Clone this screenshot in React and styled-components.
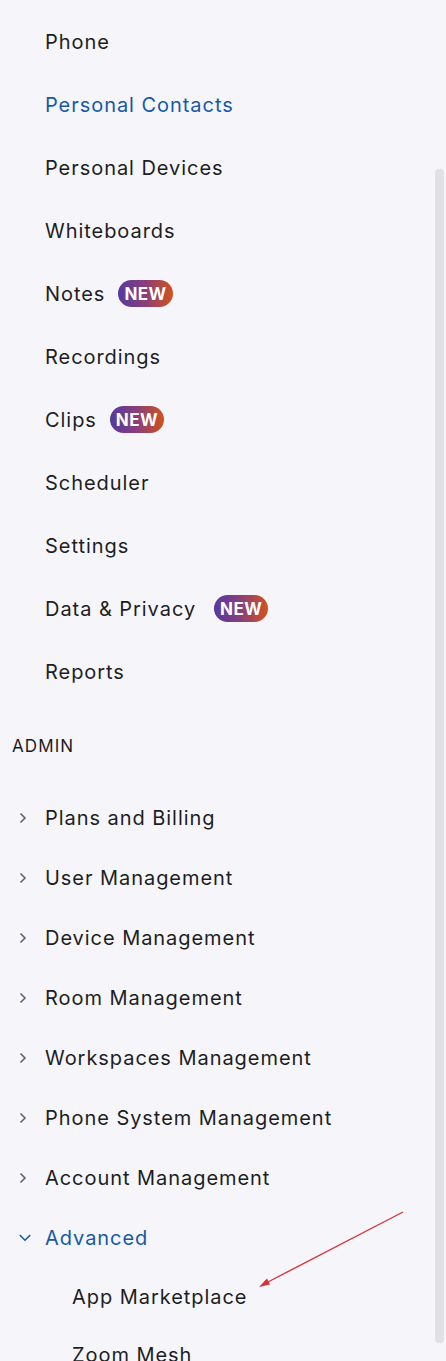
import React from 'react'
import styled, { createGlobalStyle } from 'styled-components'

const ink = '#1d1d24'
const blue = '#1559a8'
const bg = '#f6f6fa'

const GlobalStyle = createGlobalStyle`
  html, body {
    margin: 0;
    padding: 0;
    background: ${bg};
  }
  body {
    font-family: Inter, 'Noto Sans', sans-serif;
    -webkit-font-smoothing: antialiased;
  }
`

const Page = styled.div`
  position: relative;
  width: 446px;
  height: 1361px;
  overflow: hidden;
  background: ${bg};
`

const Nav = styled.nav`
  display: flex;
  flex-direction: column;
  padding-top: 10px;
`

const Item = styled.div`
  display: flex;
  align-items: center;
  height: 63px;
  padding-left: 45px;
  font-size: 20px;
  letter-spacing: 0.95px;
  color: ${({ active }) => (active ? blue : ink)};
`

const Badge = styled.span`
  display: inline-flex;
  align-items: center;
  justify-content: center;
  height: 27px;
  padding: 0 6px;
  margin-left: ${({ gap = 13 }) => gap}px;
  border-radius: 14px;
  background: linear-gradient(90deg, #55399f 0%, #8a3f7a 50%, #d2521c 100%);
  color: #fff;
  font-size: 17px;
  font-weight: 700;
  letter-spacing: 0.4px;
`

const SectionLabel = styled.div`
  display: flex;
  align-items: center;
  height: 85px;
  padding-left: 12px;
  font-size: 17px;
  color: ${ink};
  letter-spacing: 1.1px;
`

const AdminItem = styled.div`
  display: flex;
  align-items: center;
  height: 60px;
  padding-left: 12px;
  font-size: 20px;
  letter-spacing: 0.95px;
  color: ${({ open }) => (open ? blue : ink)};
`

const Chevron = styled.span`
  display: flex;
  align-items: center;
  width: 33px;
  padding-left: 7px;
  box-sizing: border-box;
`

const SubItem = styled.div`
  display: flex;
  align-items: center;
  height: 58px;
  padding-left: 72px;
  font-size: 20px;
  letter-spacing: 0.95px;
  color: ${ink};
`

const ScrollThumb = styled.div`
  position: absolute;
  left: 435px;
  top: 169px;
  width: 9px;
  height: 1174px;
  border-radius: 4px;
  background: #e1e1e4;
`

const Arrow = styled.svg`
  position: absolute;
  left: 0;
  top: 0;
  pointer-events: none;
`

const Right = () => (
  <svg width="10" height="12" viewBox="0 0 10 12">
    <polyline points="1.5,1.5 6,6 1.5,10.5" fill="none" stroke="#5f5f6a" strokeWidth="1.5" />
  </svg>
)

const Down = () => (
  <svg width="12" height="10" viewBox="0 0 12 10">
    <polyline points="0.8,2 6,7.2 11.2,2" fill="none" stroke={blue} strokeWidth="1.6" />
  </svg>
)

const main = [
  { label: 'Phone' },
  { label: 'Personal Contacts', active: true },
  { label: 'Personal Devices' },
  { label: 'Whiteboards' },
  { label: 'Notes', badge: 13 },
  { label: 'Recordings' },
  { label: 'Clips', badge: 13 },
  { label: 'Scheduler' },
  { label: 'Settings' },
  { label: 'Data & Privacy', badge: 18 },
  { label: 'Reports' }
]

const admin = [
  'Plans and Billing',
  'User Management',
  'Device Management',
  'Room Management',
  'Workspaces Management',
  'Phone System Management',
  'Account Management'
]

const App = () => (
  <Page>
    <GlobalStyle />
    <Nav>
      {main.map(item => (
        <Item key={item.label} active={item.active}>
          {item.label}
          {item.badge && <Badge gap={item.badge}>NEW</Badge>}
        </Item>
      ))}
      <SectionLabel>ADMIN</SectionLabel>
      {admin.map(label => (
        <AdminItem key={label}>
          <Chevron><Right /></Chevron>
          {label}
        </AdminItem>
      ))}
      <AdminItem open>
        <Chevron><Down /></Chevron>
        Advanced
      </AdminItem>
      <SubItem>App Marketplace</SubItem>
      <SubItem>Zoom Mesh</SubItem>
    </Nav>
    <ScrollThumb />
    <Arrow width="446" height="1361" viewBox="0 0 446 1361">
      <line x1="403" y1="1212" x2="266" y2="1283" stroke="#d9333a" strokeWidth="1.4" />
      <polygon points="259,1287 267,1278.5 270,1284.5" fill="#d9333a" />
    </Arrow>
  </Page>
)

export default App
